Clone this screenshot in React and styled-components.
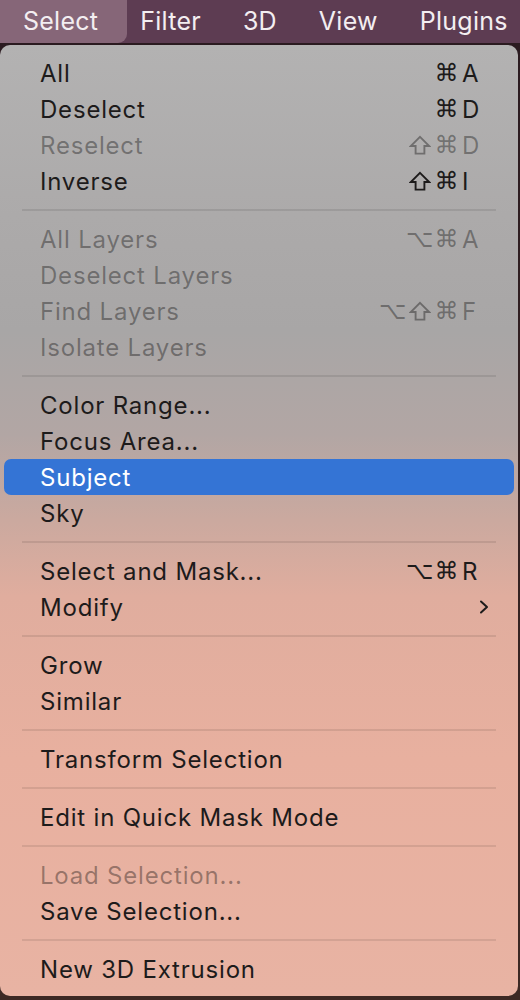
import React from "react";
import styled, { createGlobalStyle } from "styled-components";

const GlobalStyle = createGlobalStyle`
  html, body {
    margin: 0;
    padding: 0;
    background: #2e1f22;
  }
  body {
    font-family: Inter, "Noto Sans", "Liberation Sans", sans-serif;
    -webkit-font-smoothing: antialiased;
  }
`;

const Screen = styled.div`
  width: 520px;
  height: 1000px;
  overflow: hidden;
  display: flex;
  flex-direction: column;
  background: linear-gradient(180deg, #2a1a20 0%, #3d2924 100%);
`;

const MenuBar = styled.div`
  height: 43px;
  display: flex;
  align-items: stretch;
  background: #5d3c52;
  flex-shrink: 0;
`;

const MenuTitle = styled.div`
  display: flex;
  align-items: center;
  padding: ${(p) => (p.$active ? "0 29px 2px 23px" : "0 21px 2px")};
  margin-right: ${(p) => (p.$active ? "-8px" : "0")};
  font-size: 25px;
  letter-spacing: 0.25px;
  color: #f3eef1;
  background: ${(p) => (p.$active ? "#866678" : "transparent")};
  border-radius: ${(p) => (p.$active ? "0 0 9px 0" : "0")};
`;

const Panel = styled.div`
  margin-top: 2px;
  width: 518px;
  height: 951px;
  box-sizing: border-box;
  padding: 10px 0 8px;
  border-radius: 10px;
  background: linear-gradient(
    180deg,
    #b3b2b2 0%,
    #acaaaa 18%,
    #a8a6a6 30%,
    #b2a6a4 41%,
    #cba99f 50%,
    #e0ad9e 58%,
    #e8b09f 75%,
    #e8b3a3 100%
  );
  display: flex;
  flex-direction: column;
`;

const Row = styled.div`
  height: 36px;
  margin: 0 4px;
  padding: 0 30px 0 36px;
  display: flex;
  align-items: center;
  border-radius: 7px;
  font-size: 24px;
  letter-spacing: 0.8px;
  color: ${(p) =>
    p.$active ? "#ffffff" : p.$disabled ? "rgba(0, 0, 0, 0.36)" : "#1d1b1b"};
  background: ${(p) => (p.$active ? "#3474d5" : "transparent")};
`;

const Label = styled.span`
  flex: 1;
  white-space: nowrap;
`;

const Shortcut = styled.span`
  display: flex;
  align-items: center;
`;

const Mod = styled.span`
  width: 27px;
  height: 24px;
  display: flex;
  align-items: center;
  justify-content: center;
  font-family: "DejaVu Sans", sans-serif;
  font-size: 24px;
  letter-spacing: 0;
`;

const Key = styled.span`
  width: 22px;
  margin-left: 2px;
  text-align: left;
  letter-spacing: 0;
`;

const Separator = styled.div`
  height: 22px;
  display: flex;
  align-items: center;
  padding: 0 22px;
  &::after {
    content: "";
    flex: 1;
    height: 2px;
    background: rgba(0, 0, 0, 0.09);
  }
`;

const ShiftIcon = () => (
  <svg width="22" height="20" viewBox="0 0 22 20">
    <path
      d="M11 1.8 L20.2 11 H15.4 V18.6 H6.6 V11 H1.8 Z"
      fill="none"
      stroke="currentColor"
      strokeWidth="1.9"
      strokeLinejoin="miter"
    />
  </svg>
);

const Chevron = () => (
  <svg width="12" height="16" viewBox="0 0 12 16" style={{ marginRight: -6 }}>
    <path
      d="M3 2.5 L9 8 L3 13.5"
      fill="none"
      stroke="#1d1b1b"
      strokeWidth="2"
      strokeLinecap="round"
      strokeLinejoin="round"
    />
  </svg>
);

const groups = [
  [
    { label: "All", mods: ["⌘"], key: "A" },
    { label: "Deselect", mods: ["⌘"], key: "D" },
    { label: "Reselect", mods: ["⇧", "⌘"], key: "D", disabled: true },
    { label: "Inverse", mods: ["⇧", "⌘"], key: "I" },
  ],
  [
    { label: "All Layers", mods: ["⌥", "⌘"], key: "A", disabled: true },
    { label: "Deselect Layers", disabled: true },
    { label: "Find Layers", mods: ["⌥", "⇧", "⌘"], key: "F", disabled: true },
    { label: "Isolate Layers", disabled: true },
  ],
  [
    { label: "Color Range..." },
    { label: "Focus Area..." },
    { label: "Subject", active: true },
    { label: "Sky" },
  ],
  [
    { label: "Select and Mask...", mods: ["⌥", "⌘"], key: "R" },
    { label: "Modify", submenu: true },
  ],
  [{ label: "Grow" }, { label: "Similar" }],
  [{ label: "Transform Selection" }],
  [{ label: "Edit in Quick Mask Mode" }],
  [{ label: "Load Selection...", disabled: true }, { label: "Save Selection..." }],
  [{ label: "New 3D Extrusion" }],
];

const MenuItem = ({ item }) => (
  <Row $active={item.active} $disabled={item.disabled}>
    <Label>{item.label}</Label>
    {item.key && (
      <Shortcut>
        {item.mods.map((m, i) => (
          <Mod key={i}>{m === "⇧" ? <ShiftIcon /> : m}</Mod>
        ))}
        <Key>{item.key}</Key>
      </Shortcut>
    )}
    {item.submenu && <Chevron />}
  </Row>
);

export default function App() {
  return (
    <>
      <GlobalStyle />
      <Screen>
        <MenuBar>
          <MenuTitle $active>Select</MenuTitle>
          <MenuTitle>Filter</MenuTitle>
          <MenuTitle>3D</MenuTitle>
          <MenuTitle>View</MenuTitle>
          <MenuTitle>Plugins</MenuTitle>
        </MenuBar>
        <Panel>
          {groups.map((group, gi) => (
            <React.Fragment key={gi}>
              {gi > 0 && <Separator />}
              {group.map((item) => (
                <MenuItem key={item.label} item={item} />
              ))}
            </React.Fragment>
          ))}
        </Panel>
      </Screen>
    </>
  );
}
